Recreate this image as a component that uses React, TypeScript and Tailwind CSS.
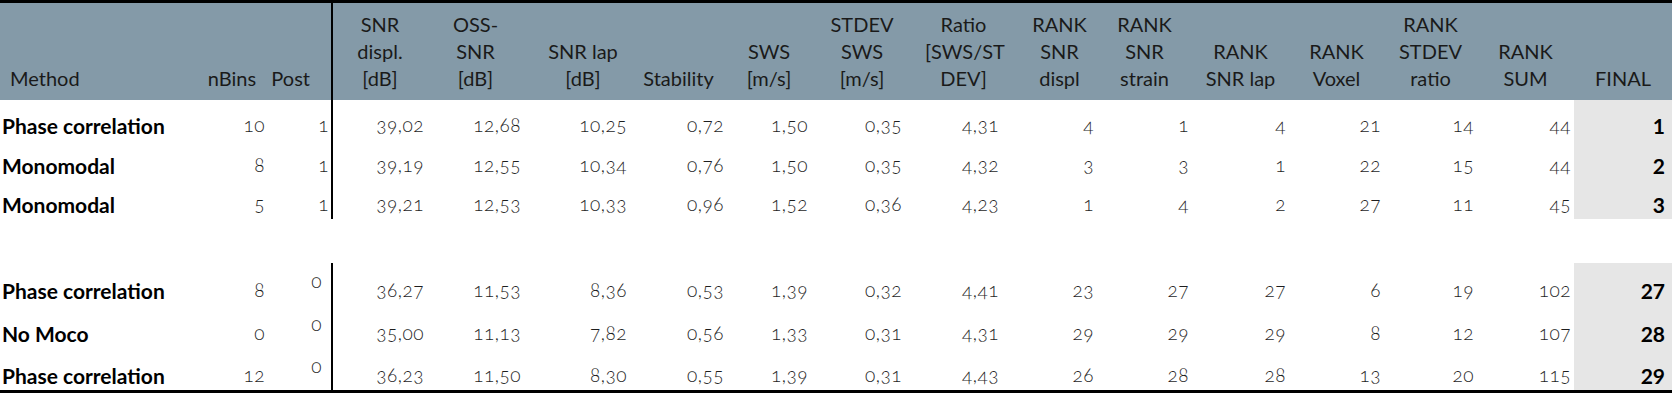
const cols = [
  { w: 'w-[196px]', head: ['Method'], hc: 'text-left pl-[10px]' },
  { w: 'w-[72px]', head: ['nBins'], hc: 'text-center' },
  { w: 'w-[65px]', head: ['Post'], hc: 'text-right pr-[21px] border-r-2 border-black' },
  { w: 'w-[94px]', head: ['SNR', 'displ.', '[dB]'], hc: 'text-center' },
  { w: 'w-[97px]', head: ['OSS-', 'SNR', '[dB]'], hc: 'text-center' },
  { w: 'w-[106px]', head: ['SNR lap', '[dB]'], hc: 'text-center pl-[12px]' },
  { w: 'w-[97px]', head: ['Stability'], hc: 'text-center' },
  { w: 'w-[84px]', head: ['SWS', '[m/s]'], hc: 'text-center' },
  { w: 'w-[94px]', head: ['STDEV', 'SWS', '[m/s]'], hc: 'text-center pl-[8px]' },
  { w: 'w-[97px]', head: ['Ratio', '[SWS/ST', 'DEV]'], hc: 'text-center pl-[20px]' },
  { w: 'w-[95px]', head: ['RANK', 'SNR', 'displ'], hc: 'text-center pl-[20px]' },
  { w: 'w-[95px]', head: ['RANK', 'SNR', 'strain'], hc: 'text-center' },
  { w: 'w-[97px]', head: ['RANK', 'SNR lap'], hc: 'text-center' },
  { w: 'w-[95px]', head: ['RANK', 'Voxel'], hc: 'text-center' },
  { w: 'w-[93px]', head: ['RANK', 'STDEV', 'ratio'], hc: 'text-center' },
  { w: 'w-[97px]', head: ['RANK', 'SUM'], hc: 'text-center' },
  { w: 'w-[98px]', head: ['FINAL'], hc: 'text-right pr-[21px]' },
];

type Row = string[];

const groupA: Row[] = [
  ['Phase correlation', '10', '1', '39,02', '12,68', '10,25', '0,72', '1,50', '0,35', '4,31', '4', '1', '4', '21', '14', '44', '1'],
  ['Monomodal', '8', '1', '39,19', '12,55', '10,34', '0,76', '1,50', '0,35', '4,32', '3', '3', '1', '22', '15', '44', '2'],
  ['Monomodal', '5', '1', '39,21', '12,53', '10,33', '0,96', '1,52', '0,36', '4,23', '1', '4', '2', '27', '11', '45', '3'],
];

const groupB: Row[] = [
  ['Phase correlation', '8', '0', '36,27', '11,53', '8,36', '0,53', '1,39', '0,32', '4,41', '23', '27', '27', '6', '19', '102', '27'],
  ['No Moco', '0', '0', '35,00', '11,13', '7,82', '0,56', '1,33', '0,31', '4,31', '29', '29', '29', '8', '12', '107', '28'],
  ['Phase correlation', '12', '0', '36,23', '11,50', '8,30', '0,55', '1,39', '0,31', '4,43', '26', '28', '28', '13', '20', '115', '29'],
];

function DataRow({ row, height, raisePost }: { row: Row; height: string; raisePost?: boolean }) {
  return (
    <tr>
      {row.map((v, i) => {
        if (i === 0) {
          return (
            <td key={i} className={`${height} align-bottom pl-[2px] pb-[2px] text-left text-[21px] leading-[24px] font-bold text-black whitespace-nowrap`}>
              {v}
            </td>
          );
        }
        if (i === row.length - 1) {
          return (
            <td key={i} className={`${height} align-bottom pr-[7px] pb-[2px] text-right text-[21px] leading-[24px] font-bold text-black bg-[#e6e6e6]`}>
              {v}
            </td>
          );
        }
        if (i === 2) {
          return (
            <td
              key={i}
              className={`${height} align-bottom ${raisePost ? 'pr-[9px]' : 'pr-[2px]'} pb-[3px] text-right text-[19px] leading-[24px] font-light tracking-[0.5px] text-[#1e1e1e] oldstyle-nums border-r-2 border-black`}
            >
              {raisePost ? <span className="align-[9px]">{v}</span> : v}
            </td>
          );
        }
        return (
          <td key={i} className={`${height} align-bottom pr-[3px] pb-[3px] text-right text-[19px] leading-[24px] font-light tracking-[0.5px] text-[#1e1e1e] oldstyle-nums`}>
            {v}
          </td>
        );
      })}
    </tr>
  );
}

export default function App() {
  const heightsA = ['h-[40px]', 'h-[40px]', 'h-[39px]'];
  const heightsB = ['h-[42px]', 'h-[43px]', 'h-[42px]'];

  return (
    <div className="w-[1672px] bg-white font-[Lato,sans-serif] text-[#1a1a1a]">
      <div className="border-t-[3px] border-b-[3px] border-black">
        <table className="table-fixed border-separate border-spacing-0 w-[1672px]">
          <colgroup>
            {cols.map((c, i) => (
              <col key={i} className={c.w} />
            ))}
          </colgroup>
          <thead>
            <tr>
              {cols.map((c, i) => (
                <th
                  key={i}
                  className={`h-[97px] align-bottom pb-[8px] bg-[#849aa8] text-[20px] leading-[27px] font-normal text-[#1a1a1a] whitespace-nowrap ${c.hc}`}
                >
                  {c.head.map((line, j) => (
                    <div key={j}>{line}</div>
                  ))}
                </th>
              ))}
            </tr>
          </thead>
          <tbody>
            {groupA.map((r, i) => (
              <DataRow key={i} row={r} height={heightsA[i]} />
            ))}
            <tr>
              <td colSpan={17} className="h-[44px]" />
            </tr>
            {groupB.map((r, i) => (
              <DataRow key={i} row={r} height={heightsB[i]} raisePost />
            ))}
          </tbody>
        </table>
      </div>
    </div>
  );
}
